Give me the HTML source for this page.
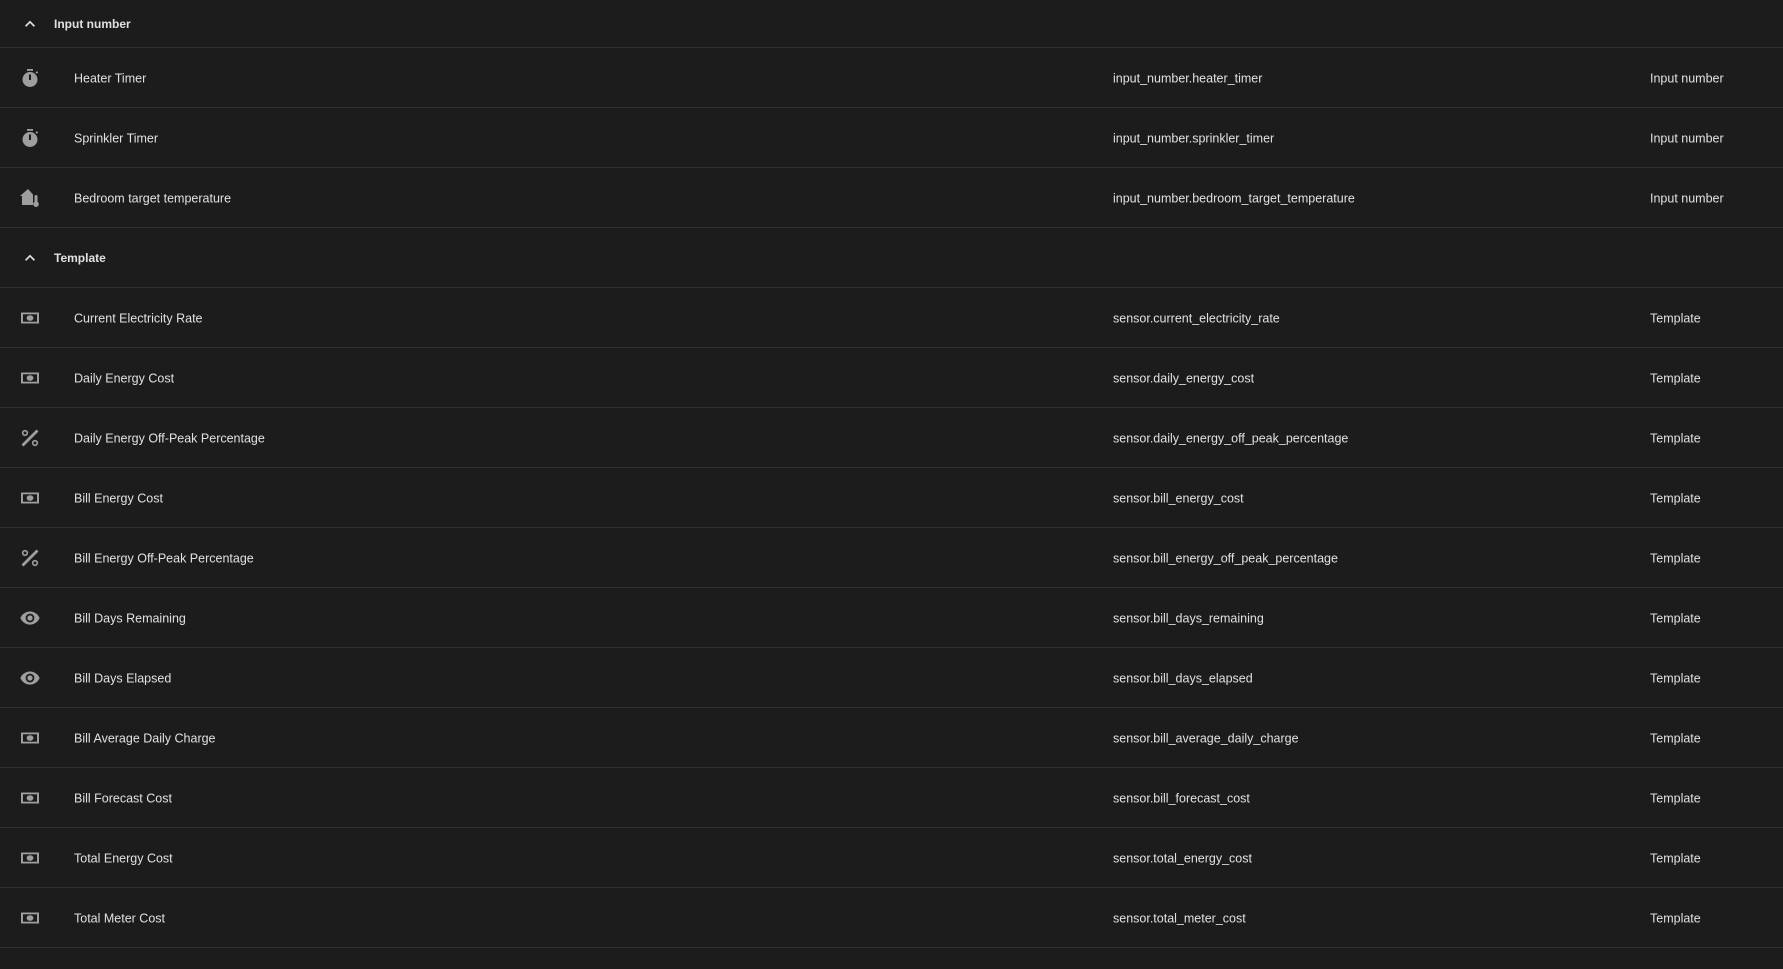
<!DOCTYPE html>
<html><head><style>
body{margin:0;background:#1c1c1c;width:1783px;height:969px;overflow:hidden;font-family:"Liberation Sans",sans-serif;color:#e1e1e1;font-size:12.5px}
.h,.r{position:relative;border-bottom:1px solid #2f2f2f;box-sizing:border-box}
.h{height:48px}
.h.t{height:60px}
.r{height:60px}
.h span{position:absolute;left:54px;top:50%;transform:translateY(-50%);font-weight:bold;font-size:12px}
.h svg{position:absolute;left:20px;top:50%;margin-top:-10px}
.r svg{position:absolute;left:18px;top:18px}
.n,.e,.d{position:absolute;top:50%;transform:translateY(-45%)}
.n{left:74px}
.e{left:1113px}
.d{left:1650px}
</style></head><body>
<svg width="0" height="0" style="position:absolute"><defs>
<g id="timer" fill="#9e9e9e"><circle cx="12" cy="13.5" r="7.5"/><rect x="9" y="3" width="6" height="1.8"/><path d="M17.5 6.5l1.4-1.4 1.3 1.3-1.4 1.4z"/><rect x="11" y="8.5" width="2" height="5.5" fill="#1c1c1c"/></g>
<g id="cash" fill="#9e9e9e"><rect x="3" y="6.5" width="18" height="11"/><rect x="5" y="8.3" width="14" height="7.4" fill="#1c1c1c"/><ellipse cx="12" cy="12" rx="3.4" ry="2.8"/></g>
<g id="pct" fill="#9e9e9e"><path d="M18.5 3.5l2 2-15 15-2-2z"/><circle cx="7" cy="7" r="2.3" fill="none" stroke="#9e9e9e" stroke-width="1.6"/><circle cx="17" cy="17" r="2.3" fill="none" stroke="#9e9e9e" stroke-width="1.6"/></g>
<g id="eye" fill="#9e9e9e" transform="translate(1.5 1.5) scale(0.875)"><path d="M12 4.5C7 4.5 2.73 7.61 1 12c1.73 4.39 6 7.5 11 7.5s9.27-3.11 11-7.5c-1.730-4.39-6-7.5-11-7.5zM12 17a5 5 0 1 1 0-10 5 5 0 0 1 0 10zm0-8a3 3 0 1 0 0 6 3 3 0 0 0 0-6z"/></g>
<g id="home" fill="#9e9e9e"><path d="M10 3L2 10h2v9h11V8.5z"/><path d="M18 9a1.5 1.5 0 0 1 1.5 1.5v5.3a2.8 2.8 0 1 1-3 0v-5.3A1.5 1.5 0 0 1 18 9z"/></g>
<path id="chev" d="M7.41 15.41L12 10.83l4.59 4.58L18 14l-6-6-6 6z" fill="#e1e1e1"/>
</defs></svg>
<div class="h"><svg width="20" height="20" viewBox="0 0 24 24"><use href="#chev"/></svg><span>Input number</span></div>
<div class="r"><svg width="24" height="24"><use href="#timer"/></svg><span class="n">Heater Timer</span><span class="e">input_number.heater_timer</span><span class="d">Input number</span></div>
<div class="r"><svg width="24" height="24"><use href="#timer"/></svg><span class="n">Sprinkler Timer</span><span class="e">input_number.sprinkler_timer</span><span class="d">Input number</span></div>
<div class="r"><svg width="24" height="24"><use href="#home"/></svg><span class="n">Bedroom target temperature</span><span class="e">input_number.bedroom_target_temperature</span><span class="d">Input number</span></div>
<div class="h t"><svg width="20" height="20" viewBox="0 0 24 24"><use href="#chev"/></svg><span>Template</span></div>
<div class="r"><svg width="24" height="24"><use href="#cash"/></svg><span class="n">Current Electricity Rate</span><span class="e">sensor.current_electricity_rate</span><span class="d">Template</span></div>
<div class="r"><svg width="24" height="24"><use href="#cash"/></svg><span class="n">Daily Energy Cost</span><span class="e">sensor.daily_energy_cost</span><span class="d">Template</span></div>
<div class="r"><svg width="24" height="24"><use href="#pct"/></svg><span class="n">Daily Energy Off-Peak Percentage</span><span class="e">sensor.daily_energy_off_peak_percentage</span><span class="d">Template</span></div>
<div class="r"><svg width="24" height="24"><use href="#cash"/></svg><span class="n">Bill Energy Cost</span><span class="e">sensor.bill_energy_cost</span><span class="d">Template</span></div>
<div class="r"><svg width="24" height="24"><use href="#pct"/></svg><span class="n">Bill Energy Off-Peak Percentage</span><span class="e">sensor.bill_energy_off_peak_percentage</span><span class="d">Template</span></div>
<div class="r"><svg width="24" height="24"><use href="#eye"/></svg><span class="n">Bill Days Remaining</span><span class="e">sensor.bill_days_remaining</span><span class="d">Template</span></div>
<div class="r"><svg width="24" height="24"><use href="#eye"/></svg><span class="n">Bill Days Elapsed</span><span class="e">sensor.bill_days_elapsed</span><span class="d">Template</span></div>
<div class="r"><svg width="24" height="24"><use href="#cash"/></svg><span class="n">Bill Average Daily Charge</span><span class="e">sensor.bill_average_daily_charge</span><span class="d">Template</span></div>
<div class="r"><svg width="24" height="24"><use href="#cash"/></svg><span class="n">Bill Forecast Cost</span><span class="e">sensor.bill_forecast_cost</span><span class="d">Template</span></div>
<div class="r"><svg width="24" height="24"><use href="#cash"/></svg><span class="n">Total Energy Cost</span><span class="e">sensor.total_energy_cost</span><span class="d">Template</span></div>
<div class="r"><svg width="24" height="24"><use href="#cash"/></svg><span class="n">Total Meter Cost</span><span class="e">sensor.total_meter_cost</span><span class="d">Template</span></div>
</body></html>
